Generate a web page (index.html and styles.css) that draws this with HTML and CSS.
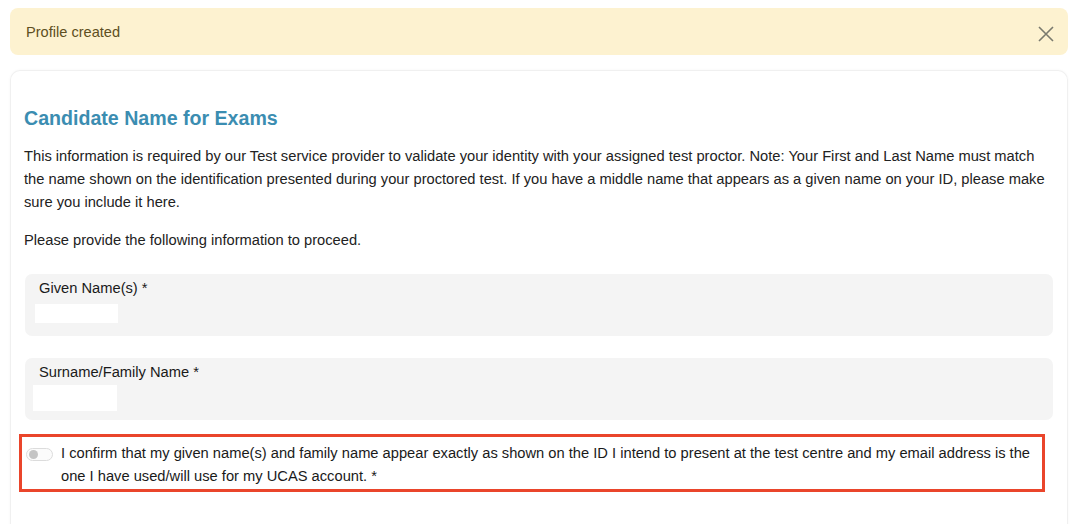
FILE: index.html
```html
<!DOCTYPE html>
<html lang="en">
<head>
<meta charset="utf-8">
<title>Candidate Name for Exams</title>
<link rel="stylesheet" href="styles.css">
</head>
<body>
<div class="page">
  <div class="alert">
    <span class="alert-text">Profile created</span>
    <button class="alert-close" type="button" aria-label="Close">
      <svg width="16" height="16" viewBox="0 0 16 16"><path d="M1 1 L15 15 M15 1 L1 15" stroke="#7a7a6e" stroke-width="1.6" fill="none"/></svg>
    </button>
  </div>

  <section class="card">
    <h2 class="card-title">Candidate Name for Exams</h2>
    <p class="text">This information is required by our Test service provider to validate your identity with your assigned test proctor. Note: Your First and Last Name must match the name shown on the identification presented during your proctored test. If you have a middle name that appears as a given name on your ID, please make sure you include it here.</p>
    <p class="text">Please provide the following information to proceed.</p>

    <div class="field">
      <label class="field-label">Given Name(s) *</label>
      <div class="field-input field-input-a"></div>
    </div>

    <div class="field field-second">
      <label class="field-label">Surname/Family Name *</label>
      <div class="field-input field-input-b"></div>
    </div>

    <div class="confirm">
      <span class="toggle"><span class="toggle-knob"></span></span>
      <span class="confirm-text">I confirm that my given name(s) and family name appear exactly as shown on the ID I intend to present at the test centre and my email address is the one I have used/will use for my UCAS account. *</span>
    </div>
  </section>
</div>
</body>
</html>
```

FILE: styles.css
```css
html, body {
  margin: 0;
  padding: 0;
  background: #ffffff;
}

body {
  font-family: "Liberation Sans", Arial, Helvetica, sans-serif;
  font-size: 14.7px;
  color: #1f1f1f;
  height: 524px;
  overflow: hidden;
}

.page {
  padding: 8px 0 0 10px;
  width: 1058px;
}

.alert {
  display: flex;
  align-items: center;
  justify-content: space-between;
  height: 47px;
  box-sizing: border-box;
  padding: 0 14px 0 16px;
  background: #fdf2d0;
  border-radius: 8px;
}

.alert-text {
  color: #5e4f22;
  font-size: 14.6px;
  margin-top: 1px;
}

.alert-close {
  border: 0;
  background: transparent;
  padding: 0;
  width: 16px;
  height: 16px;
  margin-top: 5px;
  display: flex;
}

.card {
  margin-top: 15px;
  border: 1px solid #f0f0f0;
  border-bottom: 0;
  border-radius: 10px 10px 0 0;
  box-shadow: 0 0 3px rgba(0, 0, 0, 0.04);
  padding: 35px 14px 40px 13px;
  height: 480px;
  box-sizing: border-box;
}

.card-title {
  margin: 0;
  font-size: 19.6px;
  line-height: 24px;
  font-weight: bold;
  color: #3b8db1;
}

.text {
  margin: 15px 0 0;
  font-size: 14.7px;
  line-height: 23px;
  color: #222222;
}

.text + .text {
  margin-top: 15px;
}

.field {
  margin: 22px 0 0 1px;
  height: 62px;
  box-sizing: border-box;
  background: #f4f4f4;
  border-radius: 7px;
  padding: 6px 10px 0 10px;
}

.field-second {
  margin-top: 22px;
}

.field-label {
  display: block;
  padding-left: 4px;
  font-size: 14.7px;
  line-height: 17px;
  color: #1a1a1a;
}

.field-input {
  background: #ffffff;
}

.field-input-a {
  width: 83px;
  height: 19px;
  margin-top: 7px;
}

.field-input-b {
  width: 84px;
  height: 26px;
  margin: 4px 0 0 -2px;
}

.confirm {
  margin: 14px 0 0 -5px;
  width: 1026px;
  box-sizing: border-box;
  border: 3px solid #ea452b;
  padding: 5px 2px 1px 4px;
  display: flex;
  align-items: flex-start;
  gap: 8px;
}

.toggle {
  flex: none;
  width: 27px;
  height: 13px;
  box-sizing: border-box;
  margin-top: 6px;
  border: 1px solid #dcdcdc;
  border-radius: 7px;
  background: #fbfbfb;
  display: flex;
  align-items: center;
  padding-left: 2px;
}

.toggle-knob {
  width: 9px;
  height: 9px;
  border-radius: 50%;
  background: #c4c4c4;
}

.confirm-text {
  font-size: 14.7px;
  line-height: 23px;
  color: #1a1a1a;
}
```
